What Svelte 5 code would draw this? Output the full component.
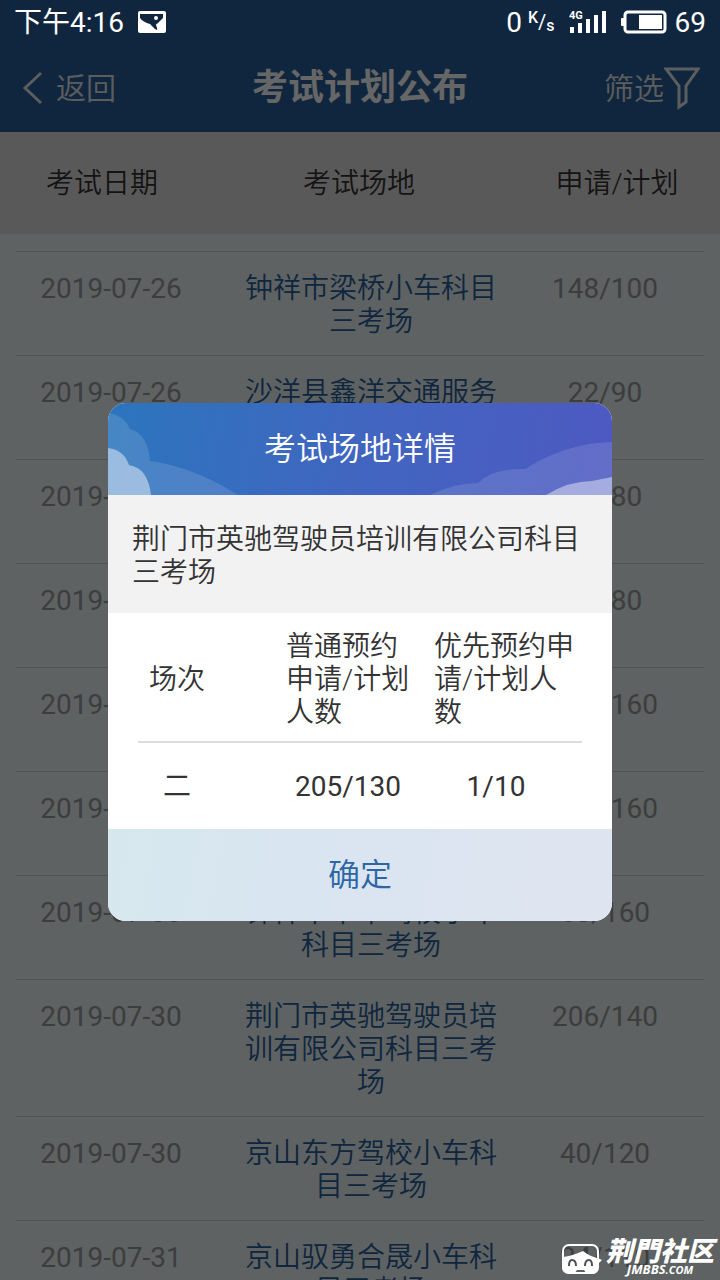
<script lang="ts">
  type Plan = { date: string; place: string; count: string }

  const plans: Plan[] = [
    { date: '2019-07-26', place: '钟祥市梁桥小车科目三考场', count: '148/100' },
    { date: '2019-07-26', place: '沙洋县鑫洋交通服务科目三考场', count: '22/90' },
    { date: '2019-07-29', place: '京山东方驾校小车科目三考场', count: '40/80' },
    { date: '2019-07-29', place: '沙洋县鑫洋交通服务科目三考场', count: '22/80' },
    { date: '2019-07-29', place: '京山驭勇合晟小车科目三考场', count: '148/160' },
    { date: '2019-07-30', place: '钟祥市梁桥小车科目三考场', count: '148/160' },
    { date: '2019-07-30', place: '钟祥市中牛驾校小车科目三考场', count: '63/160' },
    { date: '2019-07-30', place: '荆门市英驰驾驶员培训有限公司科目三考场', count: '206/140' },
    { date: '2019-07-30', place: '京山东方驾校小车科目三考场', count: '40/120' },
    { date: '2019-07-31', place: '京山驭勇合晟小车科目三考场', count: '24/110' },
  ]

  const sessions = [{ name: '二', normal: '205/130', priority: '1/10' }]

  let showDetail = $state(true)
</script>

<div class="screen">
  <div class="status">
    <span>下午4:16</span>
    <svg class="photo" width="28" height="22" viewBox="0 0 28 22">
      <rect width="28" height="22" rx="2" fill="#fff" />
      <path d="M2 3H25V12L18 13L20 16L19 19L17 18L12 13Q5 11 2 7Z" fill="#10263e" />
      <path d="M25 7V20H20L18 14Z" fill="#fff" />
      <circle cx="18" cy="7" r="2" fill="#fff" />
    </svg>
    <span class="space"></span>
    <span>0</span>
    <span class="speed"><sup>K</sup>/<sub>s</sub></span>
    <svg class="signal" width="38" height="24" viewBox="0 0 38 24">
      <g fill="#fff">
        <rect x="1" y="17" width="4" height="6" />
        <rect x="9" y="13" width="4" height="10" />
        <rect x="17" y="9" width="4" height="14" />
        <rect x="25" y="5" width="4" height="18" />
        <rect x="33" y="1" width="4" height="22" />
        <text x="0" y="9" font-size="11" font-weight="700">4G</text>
      </g>
    </svg>
    <svg class="battery" width="46" height="24" viewBox="0 0 46 24">
      <rect x="4" y="2" width="40" height="20" rx="3" fill="none" stroke="#fff" stroke-width="3" />
      <rect x="0" y="8" width="4" height="8" rx="1" fill="#fff" />
      <rect x="18" y="5" width="23" height="14" fill="#fff" />
    </svg>
    <span>69</span>
  </div>

  <div class="page">
    <header>
      <button class="nav">
        <svg width="22" height="36" viewBox="0 0 22 36">
          <path d="M19 3L3 18L19 33" fill="none" stroke="currentColor" stroke-width="3" />
        </svg>
        返回
      </button>
      <h1>考试计划公布</h1>
      <button class="nav filter">
        筛选
        <svg width="36" height="44" viewBox="0 0 36 44">
          <path d="M2 3H34L22 20V36L15 41V20Z" fill="none" stroke="currentColor" stroke-width="3" />
        </svg>
      </button>
    </header>

    <table class="plans">
      <thead>
        <tr><th>考试日期</th><th>考试场地</th><th>申请/计划</th></tr>
      </thead>
      <tbody>
        {#each plans as plan}
          <tr>
            <td>{plan.date}</td>
            <td class="place"><a href="#detail" onclick={() => (showDetail = true)}>{plan.place}</a></td>
            <td>{plan.count}</td>
          </tr>
        {/each}
      </tbody>
    </table>

    {#if showDetail}
      <div class="overlay">
        <div class="dialog" role="dialog" aria-labelledby="dialog-title">
          <div class="banner">
            <svg viewBox="0 0 504 92" preserveAspectRatio="none">
              <path d="M0 10Q16 12 22 26Q40 31 42 58Q86 64 130 92H0Z" fill="#fff" opacity=".13" />
              <path d="M0 45Q16 47 21 62Q40 65 43 92H0Z" fill="#fff" opacity=".45" />
              <path d="M322 92Q347 80 370 80Q384 65 417 66Q458 40 504 39V92Z" fill="#fff" opacity=".12" />
              <path d="M438 92Q461 78 484 78L504 74V92Z" fill="#fff" opacity=".43" />
            </svg>
            <h2 id="dialog-title">考试场地详情</h2>
          </div>
          <p>荆门市英驰驾驶员培训有限公司科目三考场</p>
          <table class="sessions">
            <thead>
              <tr><th>场次</th><th>普通预约申请/计划人数</th><th>优先预约申请/计划人数</th></tr>
            </thead>
            <tbody>
              {#each sessions as s}
                <tr><td>{s.name}</td><td>{s.normal}</td><td>{s.priority}</td></tr>
              {/each}
            </tbody>
          </table>
          <button class="ok" onclick={() => (showDetail = false)}>确定</button>
        </div>
      </div>
    {/if}
  </div>

  <div class="watermark">
    <svg width="40" height="30" viewBox="0 0 40 30">
      <rect x="1" y="1" width="35" height="28" rx="6" fill="none" stroke="#fff" stroke-width="2" />
      <path
        d="M1 13Q10 12 21 7Q27 12 35 14L40 16L37 19V23Q36 30 30 30H25L22 26H15L12 30H7Q0 29 0 23Z"
        fill="#fff"
      />
      <path
        d="M7 22Q7 16 10 16Q14 16 14 22M23 22Q23 16 27 16Q30 16 30 22"
        fill="none"
        stroke="#4c5052"
        stroke-width="2"
      />
    </svg>
    <div class="brand">
      <strong>荆門社区</strong>
      <em>JMBBS<small>.COM</small></em>
    </div>
  </div>
</div>

<style>
  :global(body) {
    margin: 0;
  }

  .screen {
    position: relative;
    display: flex;
    flex-direction: column;
    height: 100vh;
    overflow: hidden;
    font-family: Roboto, 'Noto Sans CJK SC', sans-serif;
    font-size: 28px;
    line-height: 33px;
  }

  .status {
    display: flex;
    flex: none;
    align-items: center;
    height: 44px;
    padding: 0 14px;
    box-sizing: border-box;
    background: #10263e;
    color: #fff;
  }

  .space {
    flex: 1;
  }

  .photo {
    margin-left: 14px;
  }

  .speed {
    display: flex;
    margin-left: 6px;
    font-size: 20px;
    line-height: 24px;
  }

  .speed sup,
  .speed sub {
    font-size: 16px;
    font-weight: 500;
    line-height: 16px;
    vertical-align: baseline;
  }

  .speed sub {
    align-self: flex-end;
  }

  .signal {
    margin-left: 14px;
  }

  .battery {
    margin: 0 8px 0 14px;
  }

  .page {
    position: relative;
    flex: 1;
    min-height: 0;
    overflow: hidden;
    background: #ebf4f6;
  }

  header {
    display: grid;
    grid-template-columns: 1fr auto 1fr;
    align-items: center;
    height: 88px;
    padding: 0 20px;
    background: #285f9b;
    color: #fff;
  }

  h1 {
    margin: 0;
    font-size: 36px;
    font-weight: 700;
    line-height: 44px;
  }

  button {
    border: 0;
    font: inherit;
    cursor: pointer;
  }

  .nav {
    display: flex;
    align-items: center;
    gap: 12px;
    padding: 0 2px;
    background: none;
    color: #e4e8ec;
    font-size: 30px;
    font-weight: 350;
  }

  .filter {
    justify-self: end;
    gap: 0;
    padding: 0;
  }

  table,
  thead,
  tbody {
    display: block;
  }

  tr {
    display: grid;
  }

  th,
  td {
    padding: 0;
    text-align: center;
  }

  th,
  .place {
    font-weight: 350;
  }

  .plans thead tr {
    grid-template-columns: 204fr 310fr 206fr;
    align-items: center;
    height: 102px;
    background: #e1dfdf;
    color: #333;
  }

  .plans tbody {
    padding: 17px 16px 0;
  }

  .plans tbody tr {
    grid-template-columns: 190fr 300fr 198fr;
    padding: 20px 0 17px;
    border-top: 1px solid #cbd2d3;
    color: #999;
  }

  .plans .place {
    padding-left: 30px;
  }

  .place a {
    color: #285f9b;
    text-decoration: none;
  }

  .overlay {
    position: absolute;
    inset: 0;
    display: grid;
    place-items: center;
    background: rgba(0, 0, 0, 0.6);
  }

  .dialog {
    width: 70%;
    border-radius: 18px;
    overflow: hidden;
    background: #fff;
    color: #333;
  }

  .banner {
    position: relative;
    display: grid;
    place-items: center;
    height: 92px;
    background: linear-gradient(100deg, #2b75bd, #4166c0 50%, #4e59c2);
  }

  .banner svg {
    position: absolute;
    inset: 0;
    width: 100%;
    height: 100%;
  }

  h2 {
    position: relative;
    margin: 0;
    color: #fff;
    font-size: 32px;
    font-weight: 350;
    line-height: 40px;
  }

  p {
    margin: 0;
    padding: 28px 24px 24px;
    background: #f2f2f2;
    font-weight: 350;
  }

  .sessions {
    padding: 0 30px;
  }

  .sessions tr {
    grid-template-columns: repeat(3, 1fr);
    align-items: center;
  }

  .sessions thead tr {
    padding: 17px 0 12px;
    border-bottom: 2px solid #dcdcdc;
  }

  .sessions tbody tr {
    height: 86px;
  }

  .sessions th {
    text-align: left;
  }

  .sessions th:nth-child(2),
  .sessions td {
    padding-right: 24px;
  }

  .sessions th:first-child,
  .sessions td:first-child {
    padding-right: 70px;
    text-align: center;
  }

  .ok {
    display: block;
    width: 100%;
    height: 92px;
    background: linear-gradient(100deg, #d6e8ee, #d9e5f1 40%, #dfe5f0);
    color: #2d65a5;
    font-size: 32px;
    font-weight: 350;
  }

  .watermark {
    position: absolute;
    right: 6px;
    bottom: 4px;
    display: flex;
    align-items: center;
    gap: 4px;
    color: #fff;
  }

  .brand {
    display: flex;
    flex-direction: column;
    align-items: center;
  }

  .brand strong {
    font-size: 27px;
    font-weight: 900;
    font-style: italic;
    line-height: 22px;
  }

  .brand em {
    font-family: 'Open Sans', sans-serif;
    font-size: 13px;
    font-weight: 700;
    line-height: 13px;
  }

  .brand small {
    font-size: 11px;
  }
</style>
